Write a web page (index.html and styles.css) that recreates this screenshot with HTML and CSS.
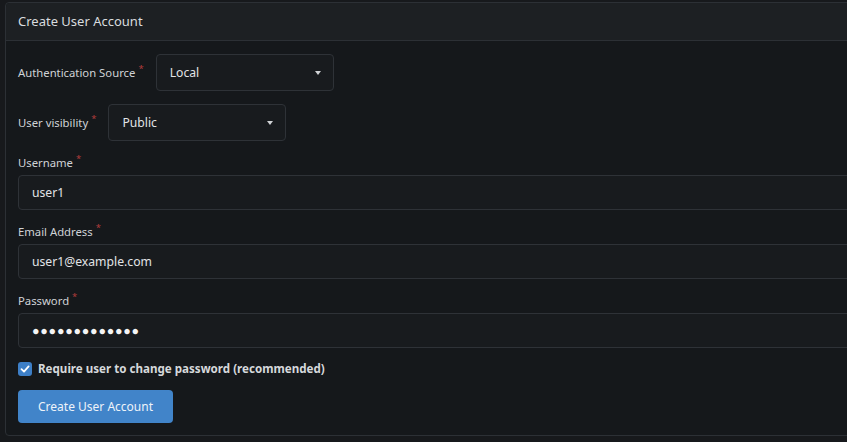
FILE: index.html
```html
<!DOCTYPE html>
<html lang="en">
<head>
    <meta charset="UTF-8">
    <title>Create User Account</title>
    <link rel="stylesheet" href="styles.css">
</head>
<body>
    <section class="card">
        <h4 class="card-head">Create User Account</h4>
        <form class="card-body">
            <div class="field inline">
                <label class="required">Authentication Source</label>
                <div class="select">
                    <span>Local</span>
                    <i class="caret"></i>
                </div>
            </div>
            <div class="field inline">
                <label class="required">User visibility</label>
                <div class="select">
                    <span>Public</span>
                    <i class="caret"></i>
                </div>
            </div>
            <div class="field">
                <label class="required">Username</label>
                <div class="input">user1</div>
            </div>
            <div class="field">
                <label class="required">Email Address</label>
                <div class="input">user1@example.com</div>
            </div>
            <div class="field">
                <label class="required">Password</label>
                <div class="input dots">&#9679;&#9679;&#9679;&#9679;&#9679;&#9679;&#9679;&#9679;&#9679;&#9679;&#9679;&#9679;&#9679;</div>
            </div>
            <div class="field check">
                <span class="box">
                    <svg width="10" height="10" viewBox="0 0 10 10"><path d="M1.5 5.2 L4 7.6 L8.6 2.4" fill="none" stroke="#fff" stroke-width="1.8" stroke-linecap="round" stroke-linejoin="round"/></svg>
                </span>
                <label>Require user to change password (recommended)</label>
            </div>
            <div class="btn">Create User Account</div>
        </form>
    </section>
</body>
</html>
```

FILE: styles.css
```css
body,html{
    margin:0;
    height:100%;
    overflow:hidden;
    background:#17191c;
}
body{
    padding:2px 0 0 5px;
    font-family:"Noto Sans","Liberation Sans",sans-serif;
    color:#d4d7da;
}
.card{
    width:900px;
    border:1px solid #2c3035;
    border-radius:4px;
    background:#15181b;
}
.card-head{
    margin:0;
    height:37px;
    line-height:37px;
    padding:0 12px;
    font-size:13px;
    font-weight:normal;
    color:#d9dcdf;
    background:#1d2023;
    border-bottom:1px solid #2c3035;
    border-radius:4px 4px 0 0;
}
.card-body{
    display:block;
    padding:13px 12px 12px;
}
.field{
    margin-bottom:13px;
}
.field label{
    display:block;
    font-size:11.3px;
    line-height:17px;
    margin-bottom:4px;
    color:#cfd2d6;
}
.required:after{
    content:'*';
    color:#b23c3c;
    margin-left:3px;
    font-size:9.5px;
    line-height:1;
    vertical-align:top;
    position:relative;
    top:0;
}
.inline{
    display:flex;
    align-items:center;
}
.inline label{
    margin:0 12px 0 0;
}
.select{
    width:178px;
    height:37px;
    box-sizing:border-box;
    border:1px solid #2e3237;
    border-radius:4px;
    background:#181b1e;
    display:flex;
    align-items:center;
    justify-content:space-between;
    padding:0 12px 0 13px;
    font-size:12.2px;
    color:#e2e4e7;
}
.caret{
    width:0;
    height:0;
    border-left:3.5px solid transparent;
    border-right:3.5px solid transparent;
    border-top:4px solid #d0d3d6;
}
.input{
    height:35px;
    box-sizing:border-box;
    border:1px solid #2e3237;
    border-radius:4px;
    background:#181b1e;
    padding:0 13px;
    line-height:33px;
    font-size:12.2px;
    color:#e2e4e7;
}
.dots{
    font-size:12.5px;
    letter-spacing:0.75px;
    color:#f4f4f4;
}
.check{
    display:flex;
    align-items:center;
    gap:6px;
    margin-top:-1px;
}
.check label{
    margin:0;
    font-weight:bold;
    font-size:11.6px;
    color:#d6d9dc;
}
.box{
    width:14px;
    height:14px;
    border-radius:3px;
    background:#3d7fc7;
    display:flex;
    align-items:center;
    justify-content:center;
}
.btn{
    display:inline-block;
    height:33px;
    line-height:33px;
    padding:0 20px;
    border-radius:4px;
    background:#4184c9;
    color:#eef3f9;
    font-size:12px;
}
```
